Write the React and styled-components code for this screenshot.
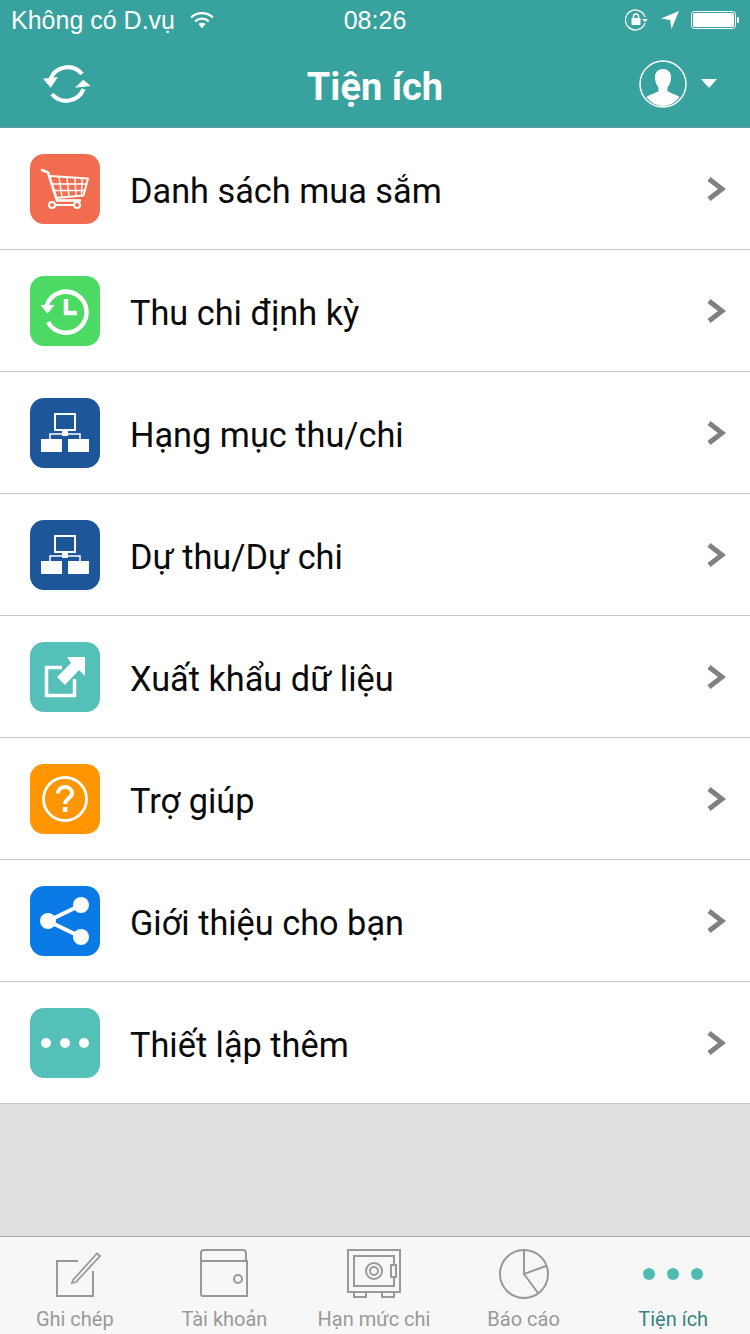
import React from "react";
import styled, { createGlobalStyle } from "styled-components";

const GlobalStyle = createGlobalStyle`
    html, body {
        margin: 0;
        padding: 0;
        background: #e0e0e0;
    }
`;

const Page = styled.div`
    width: 750px;
    height: 1334px;
    display: flex;
    flex-direction: column;
    overflow: hidden;
    font-family: Roboto, "Liberation Sans", sans-serif;
`;

const Header = styled.header`
    background-color: #37a29e;
    border-bottom: 1px solid #5f9a98;
    color: #fff;
`;

const StatusBar = styled.div`
    height: 40px;
    display: grid;
    grid-template-columns: 1fr auto 1fr;
    align-items: center;
    padding: 0 11px;
    font-family: "Liberation Sans", Arial, sans-serif;
    font-size: 25px;
`;

const StatusLeft = styled.div`
    display: flex;
    align-items: center;
    gap: 14px;
`;

const StatusRight = styled.div`
    display: flex;
    align-items: center;
    justify-content: flex-end;
    gap: 12px;
`;

const NavBar = styled.div`
    height: 87px;
    display: grid;
    grid-template-columns: 1fr auto 1fr;
    align-items: center;
    padding: 0 33px;
`;

const NavLeft = styled.div`
    margin-left: 10px;
    display: flex;
`;

const NavTitle = styled.div`
    margin-top: 6px;
    font-size: 38px;
    font-weight: 700;
`;

const NavRight = styled.div`
    display: flex;
    align-items: center;
    justify-content: flex-end;
    gap: 14px;
`;

const Caret = styled.div`
    width: 0;
    height: 0;
    border-left: 8px solid transparent;
    border-right: 8px solid transparent;
    border-top: 9px solid #fff;
`;

const Menu = styled.div`
    background-color: #fff;
`;

const Row = styled.div`
    height: 121px;
    display: flex;
    align-items: center;
    padding: 0 24px 0 30px;
    border-bottom: 1px solid #c8c8c8;
`;

const Tile = styled.div`
    width: 70px;
    height: 70px;
    flex: none;
    border-radius: 14px;
    background-color: ${(p) => p.$bg};
    color: #fff;
    svg {
        display: block;
    }
`;

const RowLabel = styled.div`
    flex: 1;
    margin: 4px 0 0 30px;
    font-size: 34.3px;
    color: #0a0a0a;
`;

const Filler = styled.div`
    flex: 1;
    background-color: #e0e0e0;
`;

const TabBar = styled.nav`
    height: 97px;
    display: grid;
    grid-template-columns: repeat(5, 1fr);
    padding-right: 2px;
    background-color: #f7f7f7;
    border-top: 1px solid #aaa;
`;

const Tab = styled.div`
    display: flex;
    flex-direction: column;
    align-items: center;
    padding-top: 12px;
    color: ${(p) => (p.$active ? "#37827e" : "#999")};
`;

const TabLabel = styled.div`
    margin-top: 8px;
    font-size: 20px;
    line-height: 24px;
    white-space: nowrap;
`;

const TileSvg = ({ children }) => (
    <svg width="70" height="70" viewBox="0 0 70 70" fill="none" stroke="#fff">
        {children}
    </svg>
);

const CartIcon = () => (
    <TileSvg>
        <path d="M12 16l6 2.500 9 28h23" strokeWidth="2.600" strokeLinecap="round" strokeLinejoin="round" />
        <path d="M20 22l38 2.500-4.500 17-28 2.500" strokeWidth="2" strokeLinejoin="round" />
        <path d="M29 23l3 20M37 23.500l2 19.500M45 24l1 18M52 24.500l-.5 17M22 30h35M24 36.500h31" strokeWidth="1.500" />
        <circle cx="22" cy="51" r="3" strokeWidth="2" />
        <circle cx="47" cy="51" r="3" strokeWidth="2" />
        <path d="M25 51h19" strokeWidth="2" />
    </TileSvg>
);

const ClockIcon = () => (
    <TileSvg>
        <path d="M16.500 30A20.500 20.500 0 1 1 18 46" strokeWidth="4.500" />
        <path d="M10.500 29h14l-7 8.500z" fill="#fff" stroke="none" />
        <path d="M36 23v14h11" strokeWidth="4.500" />
    </TileSvg>
);

const NetworkIcon = () => (
    <TileSvg>
        <rect x="25" y="16" width="20" height="16" strokeWidth="2" />
        <path d="M35 32v4M20 41v-5h30v5" strokeWidth="1.500" />
        <rect x="32" y="33" width="6" height="5" fill="#fff" stroke="none" />
        <rect x="11" y="41" width="21" height="13" fill="#fff" stroke="none" />
        <rect x="38" y="41" width="21" height="13" fill="#fff" stroke="none" />
    </TileSvg>
);

const ExportIcon = () => (
    <TileSvg>
        <path d="M32 25.500H16.500v28h28V37" strokeWidth="3.500" />
        <path d="M37 15h18v19l-6-6-14 15-8-8 14-14z" fill="#fff" stroke="none" />
    </TileSvg>
);

const HelpIcon = () => (
    <TileSvg>
        <circle cx="35" cy="35" r="21.500" strokeWidth="2.800" />
        <path d="M28 29.500c0-4 3-6.500 7-6.500s7 2.500 7 6c0 5.500-7 5.500-7 11" strokeWidth="4" />
        <rect x="32.700" y="43" width="4.600" height="5" fill="#fff" stroke="none" />
    </TileSvg>
);

const ShareIcon = () => (
    <TileSvg>
        <path d="M51 19L18 35l33 16" strokeWidth="4" />
        <circle cx="18" cy="35" r="8" fill="#fff" stroke="none" />
        <circle cx="51" cy="19" r="8" fill="#fff" stroke="none" />
        <circle cx="51" cy="51" r="8" fill="#fff" stroke="none" />
    </TileSvg>
);

const DotsIcon = () => (
    <TileSvg>
        <circle cx="16" cy="35" r="5" fill="#fff" stroke="none" />
        <circle cx="35" cy="35" r="5" fill="#fff" stroke="none" />
        <circle cx="54" cy="35" r="5" fill="#fff" stroke="none" />
    </TileSvg>
);

const Chevron = () => (
    <svg width="20" height="26" viewBox="0 0 20 26" fill="none">
        <path d="M3 3l13 10L3 23" stroke="#808080" strokeWidth="5" />
    </svg>
);

const WifiIcon = () => (
    <svg width="26" height="20" viewBox="0 0 28 22" fill="none" stroke="#fff" strokeWidth="2.500">
        <path d="M2 8c7-6 17-6 24 0M6.500 12.500c4.500-4 10.500-4 15 0" />
        <path d="M10 15.500c2.500-2 5.500-2 8 0l-4 4.500z" fill="#fff" stroke="none" />
    </svg>
);

const RotationLockIcon = () => (
    <svg width="24" height="22" viewBox="0 0 24 22" fill="none" stroke="#fff">
        <path d="M20 8a10 10 0 1 0 0 6" strokeWidth="1.300" />
        <path d="M17 10h6l-3 3z" fill="#fff" stroke="none" />
        <rect x="6.500" y="9" width="9" height="7" rx="1" fill="#fff" stroke="none" />
        <path d="M8.500 9V7.500a2.500 2.500 0 0 1 5 0V9" strokeWidth="1.500" />
    </svg>
);

const LocationIcon = () => (
    <svg width="18" height="18" viewBox="0 0 18 18">
        <path d="M18 0L0 7.500l9 1.500 1.500 9z" fill="#fff" />
    </svg>
);

const BatteryIcon = () => (
    <svg width="48" height="18" viewBox="0 0 48 18" fill="none">
        <rect x=".5" y=".5" width="44" height="17" rx="3" stroke="#fff" />
        <rect x="2" y="2" width="41" height="14" rx="1.500" fill="#fff" />
        <path d="M46 6h1a1 1 0 0 1 1 1v4a1 1 0 0 1-1 1h-1z" fill="#fff" />
    </svg>
);

const RefreshIcon = () => (
    <svg width="48" height="44" viewBox="0 0 48 44" fill="none" stroke="#fff" strokeWidth="4.200">
        <path d="M7.500 17A18.500 18.500 0 0 1 39 12" />
        <path d="M40.500 27A18.500 18.500 0 0 1 9 32" />
        <path d="M0 16.800l15-1.800-7.300 10.800z" fill="#fff" stroke="none" />
        <path d="M32 25.800l15.700-1.800-7.400-6.200z" fill="#fff" stroke="none" />
    </svg>
);

const AvatarIcon = () => (
    <svg width="48" height="48" viewBox="0 0 48 48" fill="none">
        <circle cx="24" cy="24" r="23" stroke="#fff" strokeWidth="1.500" />
        <path
            d="M24 9c-5.500 0-8.500 4-8 9.500.3 3.500 1.500 6.500 3.500 9v3.500c-2 2-8 3-12 6 3.500 5 10 9 16.500 9s13-4 16.500-9c-4-3-10-4-12-6v-3.500c2-2.500 3.200-5.500 3.500-9C32.500 13 29.500 9 24 9z"
            fill="#fff"
        />
    </svg>
);

const TabSvg = ({ children }) => (
    <svg width="70" height="50" viewBox="0 0 70 50" fill="none" stroke="currentColor" strokeWidth="2">
        {children}
    </svg>
);

const PencilIcon = () => (
    <TabSvg>
        <path d="M38 12H17v35h36V22" strokeWidth="2" />
        <path d="M33 31l24-26.500 3 2.500-24 26-4 1z" strokeWidth="1.800" />
    </TabSvg>
);

const WalletIcon = () => (
    <TabSvg>
        <path d="M12 12v33a2 2 0 0 0 1 2h45V12zM12 12V4a3 3 0 0 1 3-3h39a3 3 0 0 1 3 3v8" />
        <circle cx="49" cy="30" r="4" />
    </TabSvg>
);

const SafeIcon = () => (
    <TabSvg>
        <rect x="9" y="1" width="52" height="42" />
        <rect x="15" y="7" width="40" height="30" />
        <circle cx="35" cy="22" r="8" />
        <circle cx="35" cy="22" r="4" />
        <rect x="52" y="16" width="5" height="12" fill="#f7f7f7" />
        <path d="M15 43v5h12v-5M43 43v5h12v-5" />
    </TabSvg>
);

const PieIcon = () => (
    <TabSvg>
        <circle cx="35" cy="25" r="24" />
        <path d="M35 1v24l22-8M35 25l14 19" />
    </TabSvg>
);

const ActiveDotsIcon = () => (
    <svg width="70" height="50" viewBox="0 0 70 50">
        <circle cx="11" cy="25" r="6" fill="#4fbcb1" />
        <circle cx="35" cy="25" r="6" fill="#4fbcb1" />
        <circle cx="59" cy="25" r="6" fill="#4fbcb1" />
    </svg>
);

const menuItems = [
    { label: "Danh sách mua sắm", bg: "#f26c50", icon: <CartIcon /> },
    { label: "Thu chi định kỳ", bg: "#4cd964", icon: <ClockIcon /> },
    { label: "Hạng mục thu/chi", bg: "#1d5799", icon: <NetworkIcon /> },
    { label: "Dự thu/Dự chi", bg: "#1d5799", icon: <NetworkIcon /> },
    { label: "Xuất khẩu dữ liệu", bg: "#55c0b8", icon: <ExportIcon /> },
    { label: "Trợ giúp", bg: "#ff9500", icon: <HelpIcon /> },
    { label: "Giới thiệu cho bạn", bg: "#0a7ae6", icon: <ShareIcon /> },
    { label: "Thiết lập thêm", bg: "#55c0b8", icon: <DotsIcon /> },
];

const tabs = [
    { label: "Ghi chép", icon: <PencilIcon /> },
    { label: "Tài khoản", icon: <WalletIcon /> },
    { label: "Hạn mức chi", icon: <SafeIcon /> },
    { label: "Báo cáo", icon: <PieIcon /> },
    { label: "Tiện ích", icon: <ActiveDotsIcon />, active: true },
];

const App = () => {
    return (
        <Page>
            <GlobalStyle />
            <Header>
                <StatusBar>
                    <StatusLeft>
                        <span>Không có D.vụ</span>
                        <WifiIcon />
                    </StatusLeft>
                    <span>08:26</span>
                    <StatusRight>
                        <RotationLockIcon />
                        <LocationIcon />
                        <BatteryIcon />
                    </StatusRight>
                </StatusBar>
                <NavBar>
                    <NavLeft><RefreshIcon /></NavLeft>
                    <NavTitle>Tiện ích</NavTitle>
                    <NavRight>
                        <AvatarIcon />
                        <Caret />
                    </NavRight>
                </NavBar>
            </Header>
            <Menu>
                {menuItems.map((item) => (
                    <Row key={item.label}>
                        <Tile $bg={item.bg}>{item.icon}</Tile>
                        <RowLabel>{item.label}</RowLabel>
                        <Chevron />
                    </Row>
                ))}
            </Menu>
            <Filler />
            <TabBar>
                {tabs.map((tab) => (
                    <Tab key={tab.label} $active={tab.active}>
                        {tab.icon}
                        <TabLabel>{tab.label}</TabLabel>
                    </Tab>
                ))}
            </TabBar>
        </Page>
    );
};

export default App;
